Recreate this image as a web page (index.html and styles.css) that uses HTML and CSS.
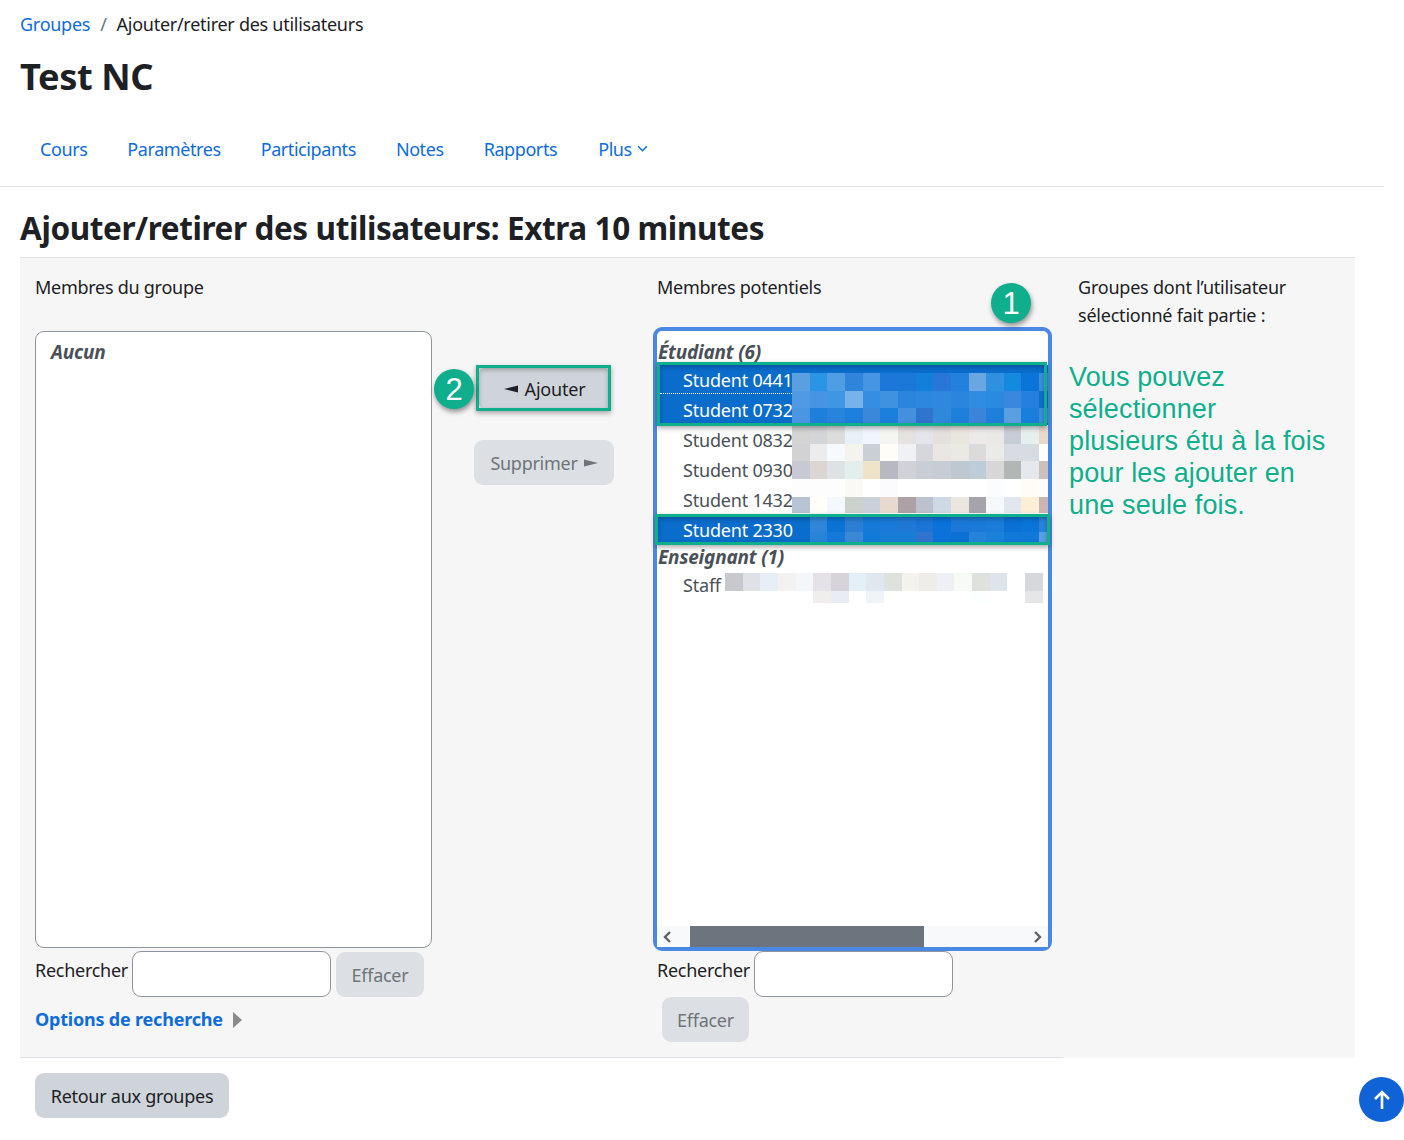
FILE: index.html
```html
<!DOCTYPE html>
<html lang="fr">
<head>
<meta charset="utf-8">
<title>Ajouter/retirer des utilisateurs</title>
<link rel="stylesheet" href="styles.css">
</head>
<body>
<header class="page-header">
  <nav class="crumbs"><a href="#">Groupes</a><span class="sep">/</span><span>Ajouter/retirer des utilisateurs</span></nav>
  <h1 class="course">Test NC</h1>
  <ul class="tabs">
    <li><a href="#">Cours</a></li>
    <li><a href="#">Paramètres</a></li>
    <li><a href="#">Participants</a></li>
    <li><a href="#">Notes</a></li>
    <li><a href="#">Rapports</a></li>
    <li><a href="#" class="more">Plus <svg class="chev" width="11" height="7" viewBox="0 0 10 6"><path d="M1 1l4 4 4-4" fill="none" stroke="currentColor" stroke-width="1.4"/></svg></a></li>
  </ul>
</header>

<h2 class="title">Ajouter/retirer des utilisateurs: Extra 10 minutes</h2>

<main class="region">
  <div class="cols">
    <section class="col-left">
      <p class="col-label">Membres du groupe</p>
      <div class="listbox"><div class="group">Aucun</div></div>
      <div class="search">
        <label>Rechercher</label><span class="field"></span>
        <button class="btn disabled clear-inline">Effacer</button>
      </div>
      <div class="options"><a href="#">Options de recherche</a><svg class="tri" width="9" height="16" viewBox="0 0 9 16"><path d="M0 0l9 8-9 8z" fill="#8a8a8a"/></svg></div>
    </section>
    <section class="col-mid">
      <button class="btn add"><svg width="15" height="8" viewBox="0 0 15 8"><path d="M0 4L6 2.6 14 .5v7L6 5.4z" fill="#1d2125"/></svg> Ajouter</button>
      <button class="btn disabled remove">Supprimer <svg width="15" height="8" viewBox="0 0 15 8"><path d="M15 4L9 2.6 1 .5v7L9 5.4z" fill="#6f7479"/></svg></button>
    </section>
    <section class="col-right">
      <p class="col-label inset">Membres potentiels</p>
      <div class="listbox focused">
        <div class="group">Étudiant (6)</div>
        <div class="opt sel dotted">Student 0441</div>
        <div class="opt sel">Student 0732</div>
        <div class="opt">Student 0832</div>
        <div class="opt">Student 0930</div>
        <div class="opt">Student 1432</div>
        <div class="opt sel">Student 2330</div>
        <div class="group">Enseignant (1)</div>
        <div class="opt">Staff</div>
        <div class="hscroll">
          <svg class="arrow" width="10" height="12" viewBox="0 0 10 12"><path d="M8 1L3 6l5 5" fill="none" stroke="#5f6368" stroke-width="2.4"/></svg>
          <div class="track"><span class="thumb"></span></div>
          <svg class="arrow" width="10" height="12" viewBox="0 0 10 12"><path d="M2 1l5 5-5 5" fill="none" stroke="#5f6368" stroke-width="2.4"/></svg>
        </div>
      </div>
      <div class="search inset">
        <label>Rechercher</label><span class="field"></span>
        <button class="btn disabled clear-block">Effacer</button>
      </div>
    </section>
  </div>
  <aside class="side">Groupes dont l’utilisateur sélectionné fait partie :</aside>
</main>

<div class="foot"><button class="btn back">Retour aux groupes</button></div>

<svg class="pixels" width="391" height="240" shape-rendering="crispEdges">
  <g class="h18" transform="translate(135,8) scale(17.65,1)"><rect x="0" fill="#5a9fe0"/><rect x="1" fill="#2a95e4"/><rect x="2" fill="#4f9ee3"/><rect x="3" fill="#2f85dc"/><rect x="4" fill="#4695e2"/><rect x="5" fill="#1b78d8"/><rect x="6" fill="#1b78d8"/><rect x="7" fill="#137fdc"/><rect x="8" fill="#2876d8"/><rect x="9" fill="#2380dc"/><rect x="10" fill="#6aa6e2"/><rect x="11" fill="#2f90e0"/><rect x="12" fill="#138ade"/><rect x="13" fill="#0a74d8"/><rect x="14" fill="#3a8ede"/></g>
  <g class="h18" transform="translate(135,26) scale(17.65,1)"><rect x="0" fill="#4f9ae2"/><rect x="1" fill="#4795e2"/><rect x="2" fill="#3f97e2"/><rect x="3" fill="#77b3ea"/><rect x="4" fill="#358ee2"/><rect x="5" fill="#3f93de"/><rect x="6" fill="#2b85dc"/><rect x="7" fill="#2d87de"/><rect x="8" fill="#2f88de"/><rect x="9" fill="#2b85de"/><rect x="10" fill="#2f8ce0"/><rect x="11" fill="#2a8ae0"/><rect x="12" fill="#3a88de"/><rect x="13" fill="#2480dc"/><rect x="14" fill="#0f70d0"/></g>
  <g class="h15" transform="translate(135,43) scale(17.65,1)"><rect x="0" fill="#4a96e2"/><rect x="1" fill="#1f80dc"/><rect x="2" fill="#2783dc"/><rect x="3" fill="#1c80dc"/><rect x="4" fill="#3a88da"/><rect x="5" fill="#1a80dc"/><rect x="6" fill="#4490dc"/><rect x="7" fill="#2f74cf"/><rect x="8" fill="#3088da"/><rect x="9" fill="#1f80dc"/><rect x="10" fill="#3a85da"/><rect x="11" fill="#1f80dc"/><rect x="12" fill="#5a9fe2"/><rect x="13" fill="#1a7fdc"/><rect x="14" fill="#3a8ede"/></g>
  <g class="h18" transform="translate(135,61) scale(17.65,1)"><rect x="0" fill="#d4d4d4"/><rect x="1" fill="#d4d5d9"/><rect x="2" fill="#dcdcdc"/><rect x="3" fill="#e8f1f6"/><rect x="4" fill="#f0f6fc"/><rect x="5" fill="#f5f6f2"/><rect x="6" fill="#e6e2df"/><rect x="7" fill="#e4e5ea"/><rect x="8" fill="#e4e0de"/><rect x="9" fill="#e9e5df"/><rect x="10" fill="#ece9e8"/><rect x="11" fill="#ebe9e8"/><rect x="12" fill="#c8ccd6"/><rect x="13" fill="#e6eeee"/><rect x="14" fill="#e9d9cb"/></g>
  <g class="h18" transform="translate(135,79) scale(17.65,1)"><rect x="0" fill="#d2d2d4"/><rect x="1" fill="#ececee"/><rect x="2" fill="#f6fafd"/><rect x="3" fill="#f5f3ee"/><rect x="4" fill="#c9cfd5"/><rect x="5" fill="#fffdf8"/><rect x="6" fill="#f0f1f5"/><rect x="7" fill="#d5d7dc"/><rect x="8" fill="#e9e6e4"/><rect x="9" fill="#eae9e3"/><rect x="10" fill="#dcdadb"/><rect x="11" fill="#eaeae8"/><rect x="12" fill="#d8dbe1"/><rect x="13" fill="#d6dce1"/></g>
  <g class="h18" transform="translate(135,96) scale(17.65,1)"><rect x="0" fill="#c8c9d2"/><rect x="1" fill="#dbd6d1"/><rect x="2" fill="#dfe2e5"/><rect x="3" fill="#e3efec"/><rect x="4" fill="#efe4c9"/><rect x="5" fill="#b7b8c2"/><rect x="6" fill="#d1d2d7"/><rect x="7" fill="#c9cdd6"/><rect x="8" fill="#c7ccd5"/><rect x="9" fill="#bfc8d1"/><rect x="10" fill="#bccdd9"/><rect x="11" fill="#d8d6d6"/><rect x="12" fill="#b2b7b5"/><rect x="13" fill="#e5e9ed"/><rect x="14" fill="#cdbfba"/></g>
  <g class="h18" transform="translate(135,114) scale(17.65,1)"><rect x="0" fill="#fdfdfd"/><rect x="1" fill="#fdfdfd"/><rect x="2" fill="#fdfdfd"/><rect x="3" fill="#faf9f3"/><rect x="5" fill="#fbfbfd"/><rect x="11" fill="#fafcfe"/><rect x="13" fill="#fffbf6"/><rect x="14" fill="#fffefb"/></g>
  <g class="h16" transform="translate(135,132) scale(17.65,1)"><rect x="0" fill="#b8c4d6"/><rect x="1" fill="#fffef9"/><rect x="2" fill="#f2f8fc"/><rect x="3" fill="#ccd1cc"/><rect x="4" fill="#c9d0d9"/><rect x="5" fill="#e7d9cd"/><rect x="6" fill="#aea1a5"/><rect x="7" fill="#bcc1ce"/><rect x="8" fill="#ced9e6"/><rect x="9" fill="#ebe6de"/><rect x="10" fill="#a6a3ad"/><rect x="11" fill="#f5f9f9"/><rect x="12" fill="#e1e7ee"/><rect x="13" fill="#fdeed8"/><rect x="14" fill="#c9b6b0"/></g>
  <g class="h16" transform="translate(135,151) scale(17.65,1)"><rect x="1" fill="#2f86d8"/><rect x="2" fill="#0a74d6"/><rect x="3" fill="#2a7ed4"/><rect x="4" fill="#1579d8"/><rect x="5" fill="#1a7ad8"/><rect x="6" fill="#2078d6"/><rect x="7" fill="#1a74d6"/><rect x="8" fill="#0a72d8"/><rect x="9" fill="#1c78d8"/><rect x="10" fill="#1b7ad8"/><rect x="11" fill="#1a7cd8"/><rect x="12" fill="#0a70d4"/><rect x="13" fill="#0a74d8"/><rect x="14" fill="#2a80da"/></g>
  <g class="h12" transform="translate(135,167) scale(17.65,1)"><rect x="1" fill="#2784d8"/><rect x="2" fill="#1479d8"/><rect x="3" fill="#3a88d6"/><rect x="4" fill="#127ad8"/><rect x="5" fill="#197dd8"/><rect x="6" fill="#197dd8"/><rect x="7" fill="#2f74d0"/><rect x="8" fill="#0a72d8"/><rect x="9" fill="#0a70d4"/><rect x="10" fill="#2484da"/><rect x="11" fill="#1a80da"/><rect x="12" fill="#1278d8"/><rect x="13" fill="#0f78d8"/><rect x="14" fill="#5a9fe0"/></g>
  <g class="h18" transform="translate(68,208) scale(17.65,1)"><rect x="0" fill="#c8c9ce"/><rect x="1" fill="#dfe1e6"/><rect x="2" fill="#e8eef5"/><rect x="3" fill="#f3f2f0"/><rect x="4" fill="#f3f7fa"/><rect x="5" fill="#e5e2e7"/><rect x="6" fill="#d6d4d9"/><rect x="7" fill="#e4f0f8"/><rect x="8" fill="#e0e7ef"/><rect x="9" fill="#dde2df"/><rect x="10" fill="#f4f2ed"/><rect x="11" fill="#efecea"/><rect x="12" fill="#edf0f5"/><rect x="13" fill="#f8faf8"/><rect x="14" fill="#dfe1dd"/><rect x="15" fill="#dde4ec"/><rect x="17" fill="#d6d8de"/></g>
  <g class="h12" transform="translate(68,226) scale(17.65,1)"><rect x="5" fill="#f1eded"/><rect x="6" fill="#e9edf3"/><rect x="8" fill="#eff4f9"/><rect x="14" fill="#fbffff"/><rect x="17" fill="#e6e6e8"/></g>
</svg>

<div class="mark mark-sel1"></div>
<div class="mark mark-sel2"></div>
<div class="mark mark-add"></div>
<div class="badge badge-1">1</div>
<div class="badge badge-2">2</div>
<p class="note">Vous pouvez sélectionner plusieurs étu à la fois pour les ajouter en une seule fois.</p>

<a class="to-top" href="#"><svg width="18" height="20" viewBox="0 0 18 20"><path d="M9 19V2M2 9l7-7 7 7" fill="none" stroke="#fff" stroke-width="2.6"/></svg></a>
</body>
</html>
```

FILE: styles.css
```css
* { box-sizing: border-box; }
html, body { margin: 0; padding: 0; }
body {
  position: relative;
  height: 1140px;
  overflow: hidden;
  background: #fff;
  color: #1d2125;
  font-family: "Noto Sans", "Open Sans", sans-serif;
  font-size: 18px;
  letter-spacing: -0.27px;
  line-height: 28px;
}
a { color: #0f6cdb; text-decoration: none; }
p { margin: 0; }

.page-header { width: 1384px; height: 187px; border-bottom: 1px solid #dee2e6; padding: 10px 0 0 20px; }
.crumbs { display: flex; height: 28px; align-items: center; }
.sep { margin: 0 10px; color: #6a737b; }
.course { margin: 16px 0 0; font-size: 36.2px; line-height: 44px; font-weight: 700; letter-spacing: -0.4px; }
.tabs { display: flex; list-style: none; margin: 37px 0 0; padding: 0; letter-spacing: -0.42px; }
.tabs li { padding: 0 20px; line-height: 28px; }
.more { display: flex; align-items: center; gap: 5px; margin-left: 1px; }
.chev { margin-top: -2px; }

.title { margin: 20px 0 0 20px; height: 50px; font-size: 31.5px; line-height: 42px; font-weight: 700; letter-spacing: -0.4px; }

.region { display: flex; width: 1335px; height: 801px; margin-left: 20px; background: #f6f6f6; border-top: 1px solid #dee2e6; }
.cols {
  display: grid;
  grid-template-columns: 397px 221px 399px;
  width: 1043px;
  height: 800px;
  padding: 15px 0 0 15px;
  border-bottom: 1px solid #dee2e6;
}
.col-label { height: 58px; line-height: 28px; }
.col-label.inset { height: 54px; padding-left: 4px; }
.inset { padding-left: 4px; }

.listbox { position: relative; height: 617px; background: #fff; border: 1px solid #8f959e; border-radius: 9px; color: #495057; letter-spacing: -0.2px; }
.listbox .group { height: 25px; line-height: 25px; padding-left: 15px; margin-top: 8px; font-size: 19px; font-weight: 700; font-style: italic; }
.listbox.focused { height: 624px; border: 4px solid #4a89e3; }
.focused .group { padding-left: 1px; margin-top: 0; }
.focused .group:first-child { margin-top: 9px; }
.opt { position: relative; height: 30px; line-height: 30px; padding-left: 26px; }
.sel { background: #0a6ccb; color: #fff; }
.dotted::after { content: ""; position: absolute; left: 3px; width: 132px; bottom: 1px; border-bottom: 1px dotted #fff; }

.hscroll { position: absolute; left: 0; right: 0; bottom: 0; height: 21px; display: flex; align-items: center; justify-content: space-between; background: #f8f9fa; padding: 0 5px; }
.track { position: absolute; left: 33px; top: 0; bottom: 0; right: 0; pointer-events: none; }
.thumb { display: block; width: 234px; height: 21px; background: #6c757d; }

.search { display: flex; flex-wrap: wrap; align-items: flex-start; margin-top: 3px; }
.search label { line-height: 38px; margin-right: 4px; }
.field { width: 199px; height: 46px; background: #fff; border: 1px solid #8f959e; border-radius: 9px; }
.col-right .search { margin-top: 0; max-width: 380px; }

.btn { font: inherit; letter-spacing: inherit; height: 45px; padding: 0 16px; border: 0; border-radius: 9px; background: #ced4da; color: #1d2125; }
.btn.disabled { background: #dcdfe3; color: #6f7479; }
.clear-inline { margin: 1px 0 0 5px; width: 88px; padding: 0; }
.clear-block { width: 87px; padding: 0; margin: 0 0 0 5px; }

.options { display: flex; align-items: center; gap: 10px; margin-top: 7px; height: 30px; font-weight: 700; letter-spacing: -0.2px; }
.tri { margin-top: 2px; }

.col-mid { display: flex; flex-direction: column; align-items: center; padding: 94px 0 0 3px; }
.add { width: 133px; height: 43px; flex: none; margin-top: 0; display: flex; align-items: center; justify-content: center; gap: 6px; padding: 0 0 0 1px; letter-spacing: -0.2px; }
.remove { width: 140px; flex: none; margin-top: 30px; display: flex; align-items: center; justify-content: center; gap: 5px; padding: 0; }

.side { flex: 1; padding: 15px 40px 0 15px; line-height: 28px; letter-spacing: -0.22px; }

.foot { padding: 15px 0 0 35px; }
.back { width: 194px; padding: 0; }

.pixels { position: absolute; left: 657px; top: 365px; }
.pixels rect { width: 1px; }
.h18 rect { height: 18px; }
.h16 rect { height: 16px; }
.h15 rect { height: 15px; }
.h12 rect { height: 12px; }

.mark { position: absolute; border: 3px solid #0fae8c; box-shadow: 0 2px 5px rgba(0,0,0,.35), inset 0 2px 4px rgba(0,0,0,.25); }
.mark-sel1 { left: 657px; top: 362px; width: 390px; height: 64px; }
.mark-sel2 { left: 655px; top: 514px; width: 395px; height: 31px; }
.mark-add { left: 476px; top: 365px; width: 135px; height: 46px; }

.badge {
  position: absolute; width: 40px; height: 40px; border-radius: 50%;
  background: #0fae8c; color: #fff; text-align: center;
  font-family: "Liberation Sans", Arial, sans-serif; font-size: 31px; line-height: 42px; letter-spacing: 0;
  box-shadow: 1px 3px 5px rgba(0,0,0,.4);
}
.badge-1 { left: 991px; top: 283px; }
.badge-2 { left: 434px; top: 369px; }

.note {
  position: absolute; left: 1069px; top: 361px; width: 262px;
  color: #0fae8c; font-family: "Liberation Sans", Arial, sans-serif; font-size: 27px; line-height: 32px; letter-spacing: 0.12px;
}

.to-top {
  position: absolute; left: 1359px; top: 1077px; width: 45px; height: 45px; border-radius: 50%;
  background: #0f63d6; display: flex; align-items: center; justify-content: center;
}
```
